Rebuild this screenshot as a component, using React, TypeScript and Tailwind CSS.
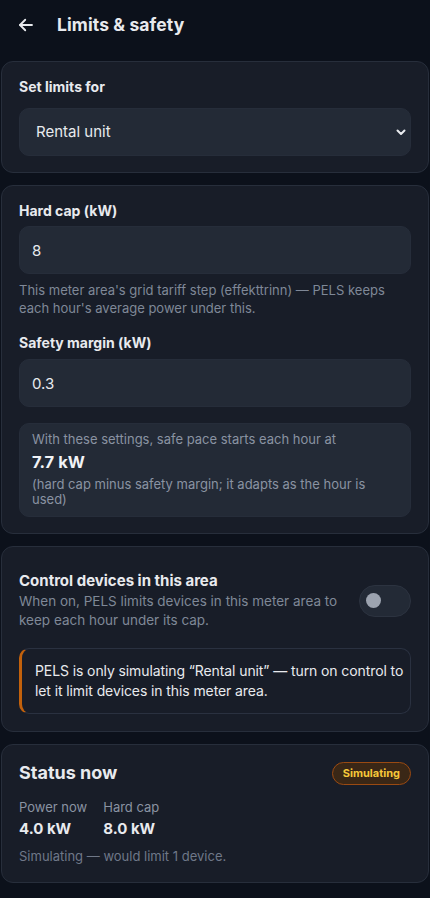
import React, { useState } from 'react';

const font = { fontFamily: 'Inter, "Noto Sans", sans-serif' };

const Card: React.FC<{ className?: string; children: React.ReactNode }> = ({ className = '', children }) => (
  <section className={`rounded-xl border border-[#272e3b] bg-[#181d28] px-[17px] ${className}`}>
    {children}
  </section>
);

const Field: React.FC<{ value: string }> = ({ value }) => (
  <input
    defaultValue={value}
    className="h-12 w-full rounded-[10px] border border-[#262d3a] bg-[#232a36] px-3 text-[15px] text-[#e8eaee] outline-none"
  />
);

const App: React.FC = () => {
  const [controlOn, setControlOn] = useState(false);

  return (
    <div style={font} className="min-h-[898px] bg-[#0c111b] px-px pb-4 text-[#e8eaee]">
      <header className="flex h-[50px] items-center gap-[22px] px-[16px]">
        <svg width="18" height="18" viewBox="0 0 24 24" fill="none" stroke="#e8eaee" strokeWidth="2.4" strokeLinecap="round" strokeLinejoin="round">
          <path d="M20 12H4" />
          <path d="M11 5l-7 7 7 7" />
        </svg>
        <h1 className="text-[17.5px] font-bold tracking-[0.1px]">Limits &amp; safety</h1>
      </header>

      <div className="mt-[11px] flex flex-col gap-3">
        <Card className="pt-[15px] pb-[16px]">
          <label className="block text-[14px] font-bold leading-5">Set limits for</label>
          <div className="relative mt-[11px]">
            <select
              defaultValue="rental"
              className="h-12 w-full appearance-none rounded-[10px] border border-[#262d3a] bg-[#232a36] px-4 text-[15px] text-[#e8eaee] outline-none"
            >
              <option value="rental">Rental unit</option>
              <option value="home">Home</option>
            </select>
            <svg className="pointer-events-none absolute right-[4px] top-1/2 -translate-y-1/2" width="12" height="12" viewBox="0 0 24 24" fill="none" stroke="#e8eaee" strokeWidth="4" strokeLinecap="round" strokeLinejoin="round">
              <path d="M5 9l7 7 7-7" />
            </svg>
          </div>
        </Card>

        <Card className="pt-[15px] pb-[16px]">
          <label className="block text-[14px] font-bold leading-5">Hard cap (kW)</label>
          <div className="mt-[5px]">
            <Field value="8" />
          </div>
          <p className="mt-[7px] text-[13px] leading-[18px] text-[#7f8897]">
            This meter area's grid tariff step (effekttrinn) — PELS keeps each hour's average power under this.
          </p>
          <label className="mt-4 block text-[14px] font-bold leading-5">Safety margin (kW)</label>
          <div className="mt-[6px]">
            <Field value="0.3" />
          </div>
          <div className="mt-4 rounded-[10px] border border-[#262d3a] bg-[#232a36] px-3 pt-[7px] pb-[10px]">
            <p className="text-[13px] leading-[16px] text-[#8a93a2]">With these settings, safe pace starts each hour at</p>
            <p className="mt-[4px] text-[16.5px] font-bold leading-[22px] text-[#f1f3f6]">7.7 kW</p>
            <p className="mt-[4px] text-[13px] leading-[14.5px] text-[#8a93a2]">
              (hard cap minus safety margin; it adapts as the hour is used)
            </p>
          </div>
        </Card>

        <Card className="pt-[24px] pb-[17px]">
          <div className="flex items-center justify-between gap-4">
            <div>
              <h2 className="text-[15px] font-bold leading-5">Control devices in this area</h2>
              <p className="mt-[1px] text-[13.5px] leading-[19px] text-[#7f8897]">
                When on, PELS limits devices in this meter area to keep each hour under its cap.
              </p>
            </div>
            <button
              type="button"
              onClick={() => setControlOn(!controlOn)}
              className={`flex h-8 w-[52px] shrink-0 items-center rounded-full border border-[#2c3340] px-[6px] ${controlOn ? 'bg-[#c2610c]' : 'bg-[#232a36]'}`}
            >
              <span className={`h-[15px] w-[15px] rounded-full bg-[#9ca3af] ${controlOn ? 'ml-auto' : ''}`} />
            </button>
          </div>
          <div className="mt-[18px] rounded-[10px] border border-[#2a3140] border-l-[3px] border-l-[#c2610c] py-[12px] pl-[13px] pr-[6px]">
            <p className="text-[14px] leading-[20px] tracking-[-0.1px] text-[#e8eaee]">
              PELS is only simulating “Rental unit” — turn on control to let it limit devices in this meter area.
            </p>
          </div>
        </Card>

        <Card className="pt-[14px] pb-[17px]">
          <div className="flex h-7 items-center justify-between">
            <h2 className="text-[18px] font-bold leading-7">Status now</h2>
            <span className="rounded-full border border-[#9a4a12] bg-[#3a2716] px-[10px] py-[2px] text-[11px] font-bold leading-[17px] text-[#f6c83a]">
              Simulating
            </span>
          </div>
          <div className="mt-[11px] flex gap-4">
            <div>
              <div className="text-[13px] leading-[18px] text-[#8a93a2]">Power now</div>
              <div className="mt-[3px] text-[15px] font-bold leading-5">4.0 kW</div>
            </div>
            <div>
              <div className="text-[13px] leading-[18px] text-[#8a93a2]">Hard cap</div>
              <div className="mt-[3px] text-[15px] font-bold leading-5">8.0 kW</div>
            </div>
          </div>
          <p className="mt-[8px] text-[13px] leading-[18px] text-[#6f7888]">Simulating — would limit 1 device.</p>
        </Card>
      </div>
    </div>
  );
};

export default App;
